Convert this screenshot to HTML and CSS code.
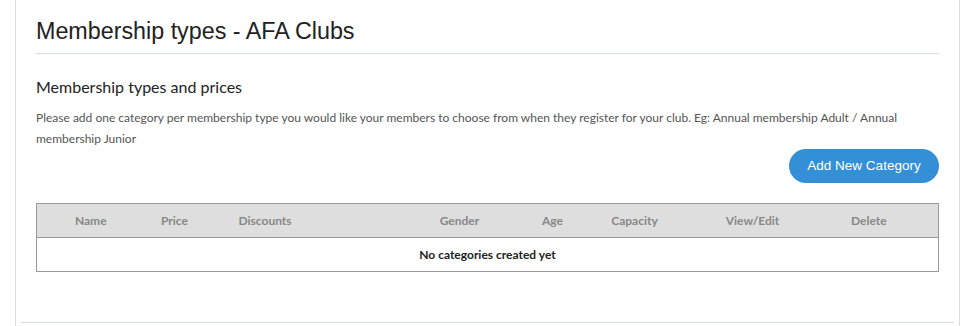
FILE: index.html
```html
<!DOCTYPE html>
<html>
	<head>
		<meta charset="UTF-8">
		<title>Membership types - AFA Clubs</title>
		<link rel="stylesheet" href="styles.css">
	</head>
	<body>
		<div class="panel">
			<h1 class="page_title">Membership types - AFA Clubs</h1>
			<h2 class="sub_title">Membership types and prices</h2>
			<p class="intro">Please add one category per membership type you would like your members to choose from when they register for your club. Eg: Annual membership Adult / Annual membership Junior</p>
			<div class="actions">
				<a class="btn_add" href="javascript:;">Add New Category</a>
			</div>
			<table class="cat_table">
				<colgroup>
					<col style="width:108px">
					<col style="width:60px">
					<col style="width:200px">
					<col style="width:110px">
					<col style="width:76px">
					<col style="width:88px">
					<col style="width:148px">
					<col>
				</colgroup>
				<thead>
					<tr>
						<th>Name</th>
						<th>Price</th>
						<th class="left">Discounts</th>
						<th>Gender</th>
						<th>Age</th>
						<th>Capacity</th>
						<th>View/Edit</th>
						<th class="last">Delete</th>
					</tr>
				</thead>
				<tbody>
					<tr>
						<td colspan="8">No categories created yet</td>
					</tr>
				</tbody>
			</table>
			<div class="panel_foot"></div>
		</div>
	</body>
</html>
```

FILE: styles.css
```css
* {margin: 0;padding: 0;box-sizing: border-box;}
body { background:#fff; font-family:Lato, "Open Sans", sans-serif; color:#333; }

.panel { width:945px; margin-left:15px; min-height:326px; border-left:1px solid #dcdcdc; border-right:1px solid #dcdcdc; padding:18px 20px 0; background:#fff; }

.page_title { font-family:"Liberation Sans", Arial, sans-serif; font-weight:normal; font-size:23.3px; line-height:26px; color:#222; padding-bottom:9px; border-bottom:1px solid #d5dbe0; }

.sub_title { font-size:16px; font-weight:normal; line-height:20px; color:#222; margin-top:23px; }
.intro { font-size:12px; line-height:21px; color:#555; margin-top:10px; }

.actions { display:flex; justify-content:flex-end; margin-top:0; }
.btn_add { display:block; width:150px; height:34px; line-height:34px; border-radius:17px; background:#3390d6; color:#fff; text-align:center; text-decoration:none; font-family:"Liberation Sans", Arial, sans-serif; font-size:13.5px; }

.cat_table { width:903px; margin-top:20px; border-collapse:collapse; table-layout:fixed; border:1px solid #9a9a9a; font-size:12px; }
.cat_table th { height:34px; background:#dedede; color:#888; font-weight:bold; text-align:center; border-bottom:1px solid #9a9a9a; }
.cat_table th.left { text-align:left; padding-left:34px; }
.cat_table th.last { padding-right:27px; }
.cat_table td { height:34px; text-align:center; font-weight:bold; color:#222; }

.panel_foot { margin:50px -15px 0; border-top:1px solid #d5dbe0; }
```
